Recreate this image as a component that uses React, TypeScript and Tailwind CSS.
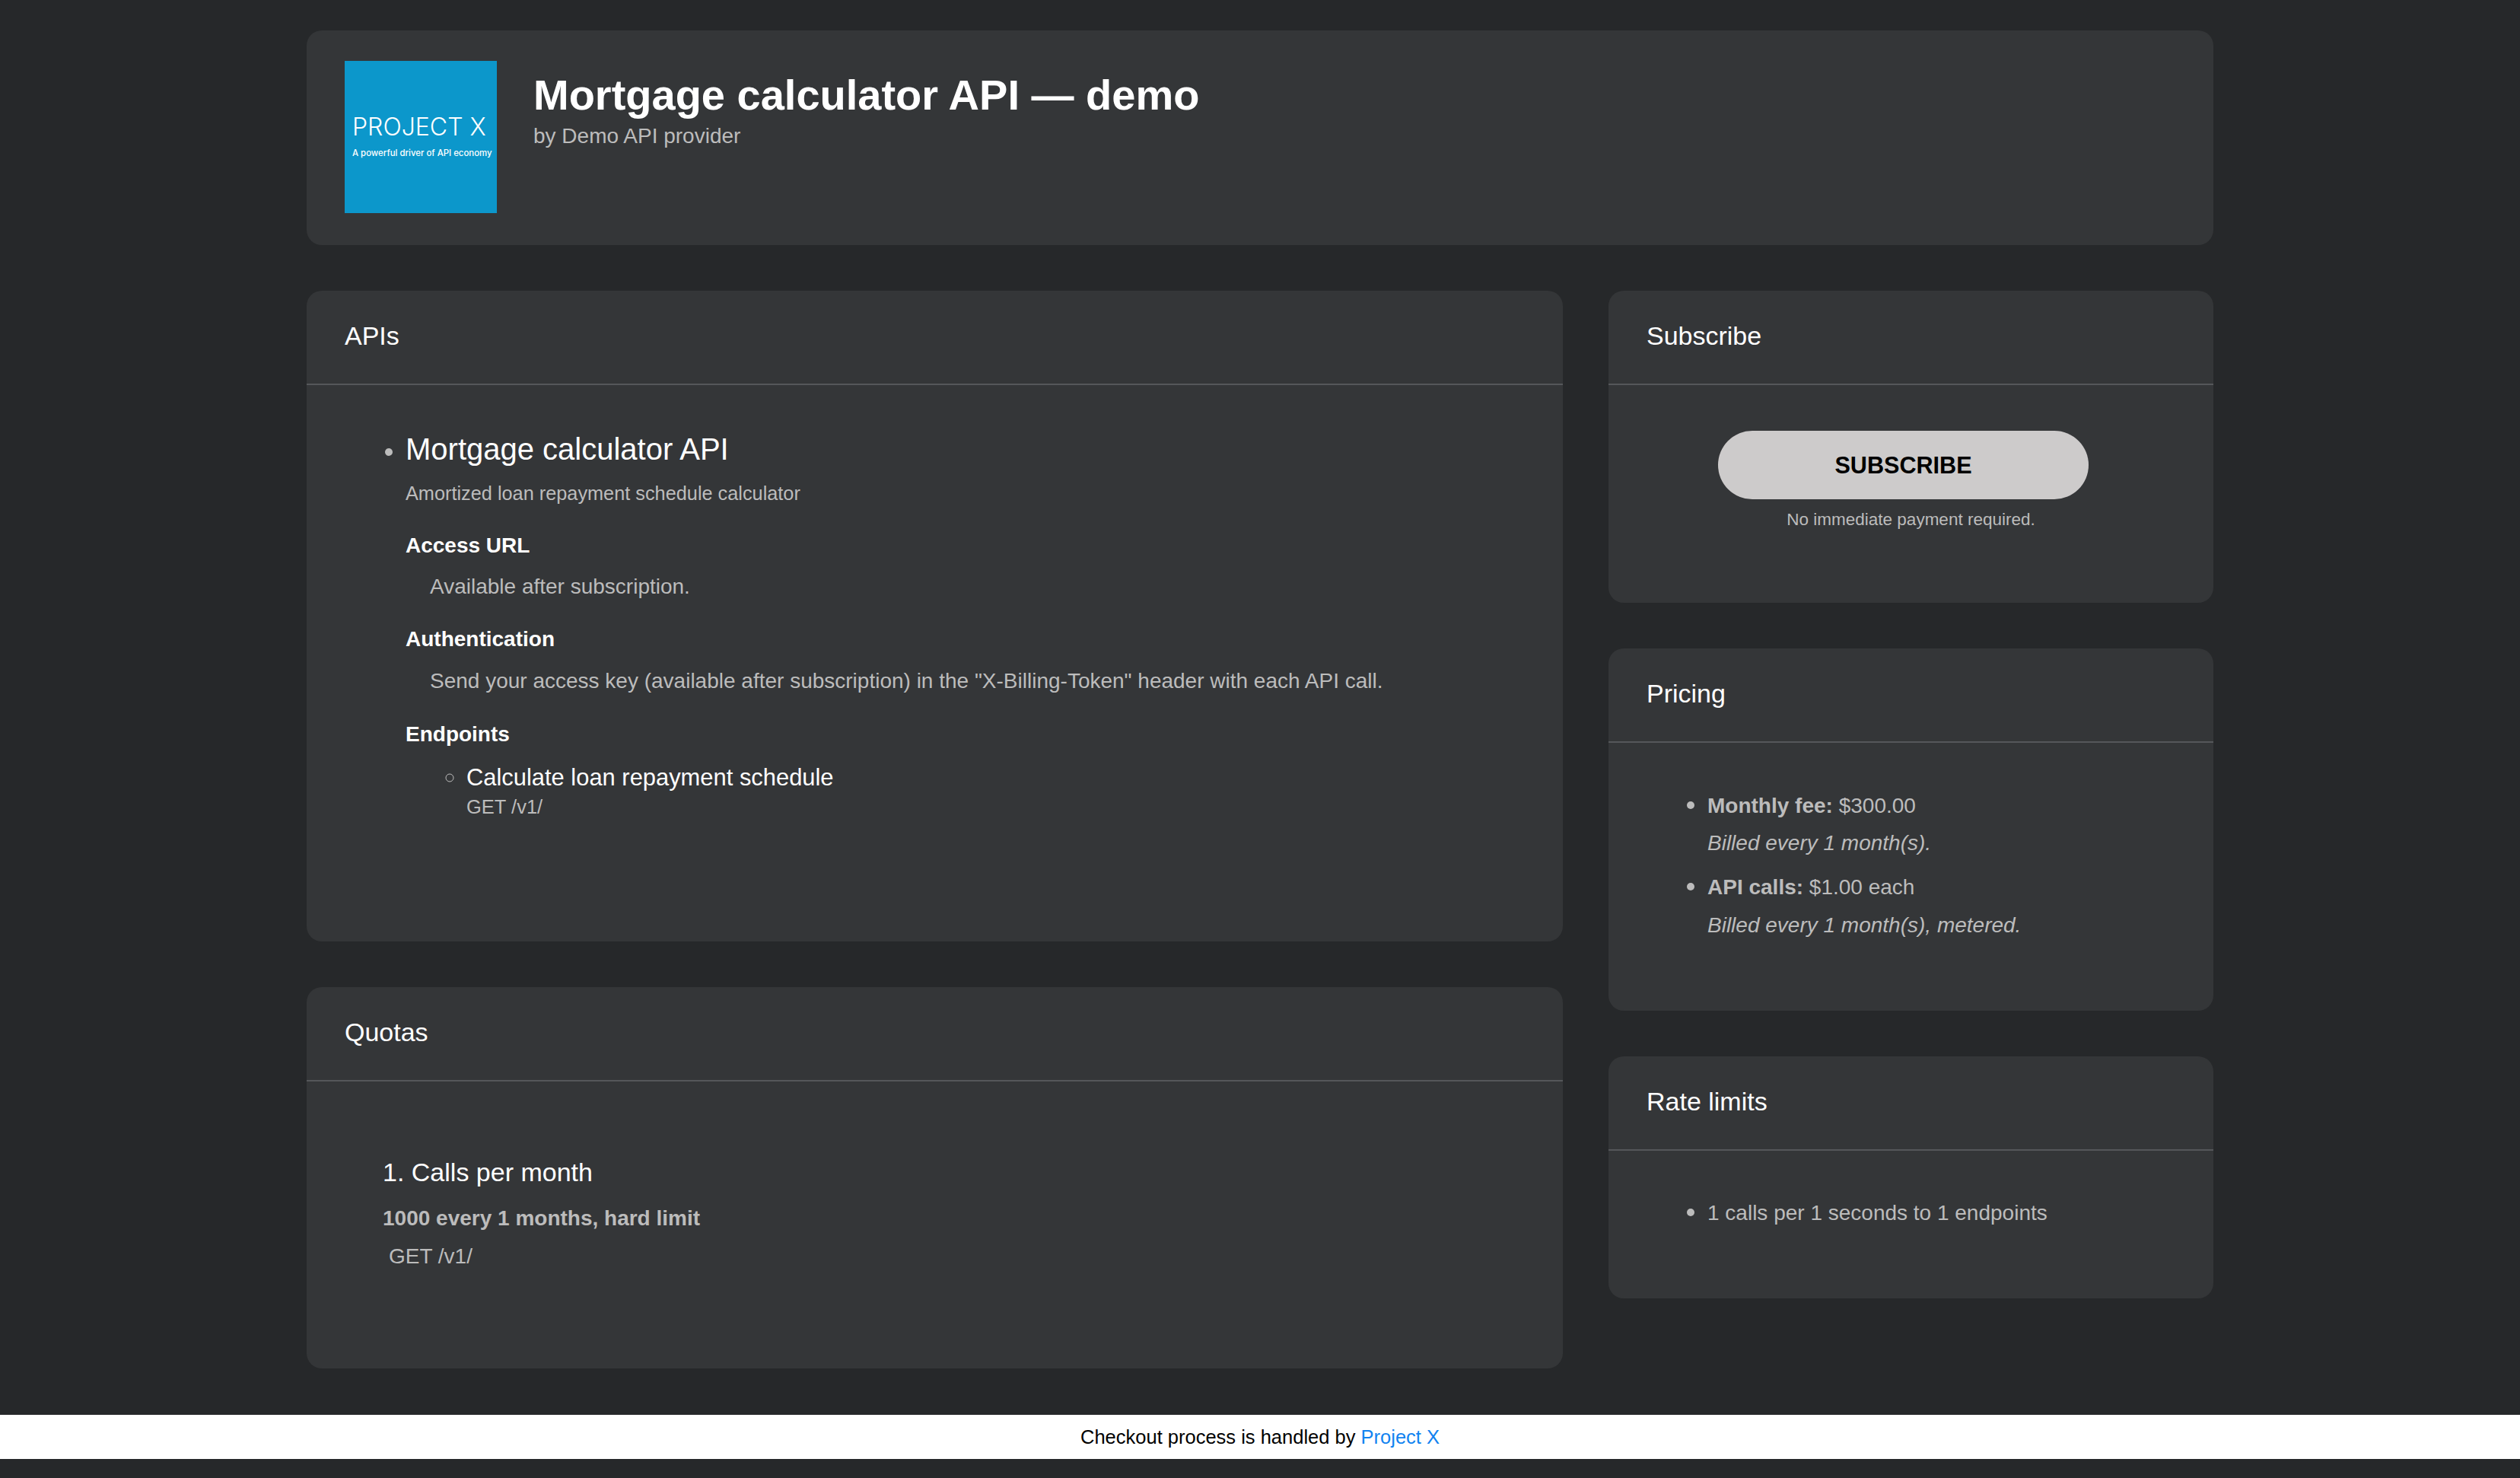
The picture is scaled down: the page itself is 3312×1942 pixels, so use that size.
const sans = "font-['Liberation_Sans',Arial,sans-serif]";

const Card = ({ title, children }: { title: string; children: React.ReactNode }) => (
  <section className="rounded-[20px] bg-[#343638]">
    <h2 className="h-[124px] border-b-2 border-[#55575a] pl-[50px] pt-[37px] text-[34px] leading-[44px] text-white">{title}</h2>
    {children}
  </section>
);

const Logo = () => (
  <div className="flex h-[200px] w-[200px] shrink-0 flex-col bg-[#0c97cb] pl-[10px] font-['Inter',sans-serif] text-white">
    <div className="mt-[67px] text-[32px] font-light leading-[40px]">PROJECT X</div>
    <div className="mt-[5px] whitespace-nowrap text-[11.4px] font-medium leading-[18px]">A powerful driver of API economy</div>
  </div>
);

export default function App() {
  return (
    <div className={`flex min-h-screen flex-col bg-[#26282a] text-[28px] leading-[40px] text-[#bcbcbc] ${sans}`}>
      <main className="mx-auto w-[2506px] pt-[40px]">
        <header className="flex gap-[48px] rounded-[20px] bg-[#343638] pb-[42px] pl-[50px] pt-[40px]">
          <Logo />
          <div className="pt-[13px]">
            <h1 className="text-[56px] font-bold leading-[64px] text-white">Mortgage calculator API — demo</h1>
            <p className="mt-[2px]">by Demo API provider</p>
          </div>
        </header>

        <div className="mt-[60px] grid grid-cols-[1651px_795px] gap-x-[60px]">
          <div className="flex flex-col gap-[60px]">
            <Card title="APIs">
              <ul className="list-disc pb-[159px] pl-[130px] pt-[60px] marker:text-[#bcbcbc] marker:text-[34px]">
                <li>
                  <h3 className="text-[40px] leading-[48px] text-white">Mortgage calculator API</h3>
                  <p className="mt-[16px] text-[25.3px] leading-[36px]">Amortized loan repayment schedule calculator</p>
                  <h4 className="mt-[31px] font-bold text-white">Access URL</h4>
                  <p className="ml-[32px] mt-[14px]">Available after subscription.</p>
                  <h4 className="mt-[29px] font-bold text-white">Authentication</h4>
                  <p className="ml-[32px] mt-[15px]">Send your access key (available after subscription) in the "X-Billing-Token" header with each API call.</p>
                  <h4 className="mt-[30px] font-bold text-white">Endpoints</h4>
                  <ul className="mt-[15px] list-[circle] pl-[80px]">
                    <li>
                      <div className="text-[30.9px] text-white">Calculate loan repayment schedule</div>
                      <div className="text-[25.5px] leading-[36px]">GET /v1/</div>
                    </li>
                  </ul>
                </li>
              </ul>
            </Card>
            <Card title="Quotas">
              <ol className="list-inside list-decimal pb-[127px] pl-[100px] pt-[97px]">
                <li className="text-[34px] leading-[44px] text-white">Calls per month</li>
                <p className="mt-[19px] font-bold">1000 every 1 months, hard limit</p>
                <p className="ml-[8px] mt-[10px]">GET /v1/</p>
              </ol>
            </Card>
          </div>

          <div className="flex flex-col gap-[60px]">
            <Card title="Subscribe">
              <div className="pb-[93px] pt-[60px]">
                <button className="ml-[144px] block h-[90px] w-[487px] rounded-full bg-[#cdcbcb] text-[30.6px] font-bold text-black">SUBSCRIBE</button>
                <p className="mt-[11px] text-center text-[22.5px] leading-[32px]">No immediate payment required.</p>
              </div>
            </Card>
            <Card title="Pricing">
              <ul className="list-disc pb-[92px] pl-[130px] pt-[60px] marker:text-[34px]">
                <li><b>Monthly fee:</b> $300.00<p className="mt-[9px] italic">Billed every 1 month(s).</p></li>
                <li className="mt-[15px]"><b>API calls:</b> $1.00 each<p className="mt-[10px] italic">Billed every 1 month(s), metered.</p></li>
              </ul>
            </Card>
            <Card title="Rate limits">
              <ul className="list-disc pb-[92px] pl-[130px] pt-[59px] marker:text-[34px]">
                <li>1 calls per 1 seconds to 1 endpoints</li>
              </ul>
            </Card>
          </div>
        </div>
      </main>

      <footer className="mt-[61px] h-[58px] bg-white text-center text-[25.5px] leading-[58px] text-black">
        Checkout process is handled by <a className="text-[#1183f0]">Project X</a>
      </footer>
    </div>
  );
}
